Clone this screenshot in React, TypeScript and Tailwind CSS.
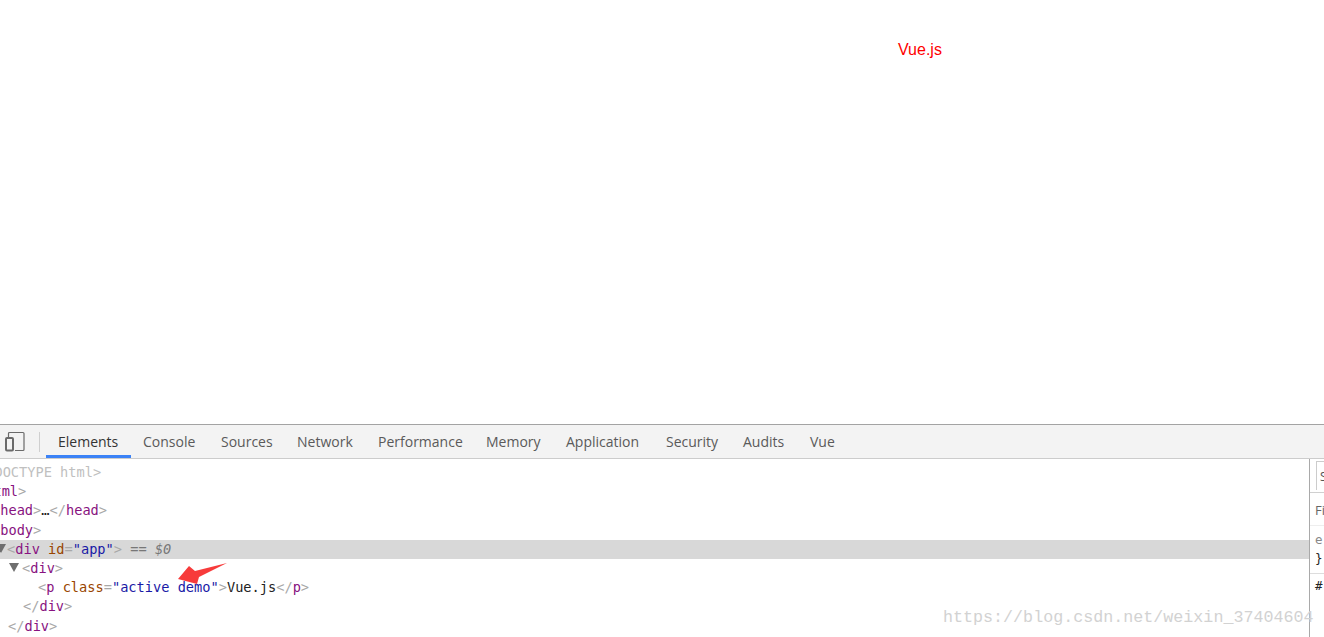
const tabs = [
  { name: "Console", width: "w-[78px]" },
  { name: "Sources", width: "w-[76px]" },
  { name: "Network", width: "w-[81px]" },
  { name: "Performance", width: "w-[108px]" },
  { name: "Memory", width: "w-[80px]" },
  { name: "Application", width: "w-[100px]" },
  { name: "Security", width: "w-[77px]" },
  { name: "Audits", width: "w-[67px]" },
  { name: "Vue", width: "w-[50px]" },
];

const Tag = ({ children }: { children: React.ReactNode }) => <span className="text-[#881280]">{children}</span>;
const Br = ({ children }: { children: React.ReactNode }) => <span className="text-[#a8a8a8]">{children}</span>;

const Caret = ({ className }: { className: string }) => (
  <svg width="10" height="9" viewBox="0 0 10 9" className={className}>
    <polygon points="0,0 10,0 5,9" fill="#6e6e6e" />
  </svg>
);

const App = () => {
  return (
    <div className="w-[1324px] h-[637px] flex flex-col overflow-hidden bg-white relative font-['Liberation_Sans',sans-serif]">
      <div className="h-[424px] pl-[898px] pt-[40px] text-[16px] leading-[20px] text-[#ff0000]">Vue.js</div>

      <div className="h-[35px] flex items-stretch bg-[#f3f3f3] border-t border-t-[#a3a3a3] border-b border-b-[#cccccc]">
        <div className="w-[46px] flex items-center">
          <svg width="20" height="21" viewBox="0 0 20 21" className="ml-[5px]" fill="none" stroke="#6a6a6a">
            <path d="M3.5 6V2.5a1 1 0 0 1 1-1h13.5a1 1 0 0 1 1 1v16a1 1 0 0 1-1 1h-8" strokeWidth="1.2" />
            <rect x="1" y="7" width="7" height="12.5" rx="1" strokeWidth="2" />
          </svg>
          <div className="w-px h-[20px] bg-[#cfcfcf] ml-[14px]"></div>
        </div>
        <div className="flex font-['Open_Sans',sans-serif] text-[14px] leading-[20px] text-[#5a5a5a]">
          <div className="w-[85px] pl-[12px] pt-[7px] text-[#333333] border-b-[3px] border-b-[#3b82f6]">Elements</div>
          {tabs.map((tab) => (
            <div key={tab.name} className={`${tab.width} pl-[12px] pt-[7px]`}>
              {tab.name}
            </div>
          ))}
        </div>
      </div>

      <div className="flex-1 flex min-h-0">
        <div className="w-[1309px] pt-[4px] overflow-hidden font-['DejaVu_Sans_Mono',monospace] text-[13.65px] leading-[19.2px] whitespace-pre text-[#222222]">
          <div className="ml-[-22px] text-[#c0c0c0]">{"<!DOCTYPE html>"}</div>
          <div className="ml-[-23px]"><Br>&lt;</Br><Tag>html</Tag><Br>&gt;</Br></div>
          <div className="ml-[-8px]"><Br>&lt;</Br><Tag>head</Tag><Br>&gt;</Br>…<Br>&lt;/</Br><Tag>head</Tag><Br>&gt;</Br></div>
          <div className="ml-[-8px]"><Br>&lt;</Br><Tag>body</Tag><Br>&gt;</Br></div>
          <div className="bg-[#d8d8d8] pl-[7px] relative">
            <Caret className="absolute left-[-4px] top-[4px]" />
            <Br>&lt;</Br><Tag>div</Tag> <span className="text-[#994500]">id</span><Br>=</Br><span className="text-[#1a1aa6]">"app"</span><Br>&gt;</Br>
            <span className="text-[#777777]"> == <i>$0</i></span>
          </div>
          <div className="pl-[22px] relative">
            <Caret className="absolute left-[9px] top-[4px]" />
            <Br>&lt;</Br><Tag>div</Tag><Br>&gt;</Br>
          </div>
          <div className="pl-[38px]">
            <Br>&lt;</Br><Tag>p</Tag> <span className="text-[#994500]">class</span><Br>=</Br><span className="text-[#1a1aa6]">"active demo"</span><Br>&gt;</Br>Vue.js<Br>&lt;/</Br><Tag>p</Tag><Br>&gt;</Br>
          </div>
          <div className="pl-[23px]"><Br>&lt;/</Br><Tag>div</Tag><Br>&gt;</Br></div>
          <div className="pl-[8px]"><Br>&lt;/</Br><Tag>div</Tag><Br>&gt;</Br></div>
        </div>

        <div className="flex-1 border-l border-l-[#a9a9a9] overflow-hidden">
          <div className="h-[34px] pl-[6px] pt-[2px] border-b border-b-[#d0d0d0]">
            <div className="h-[29px] border-l border-t border-l-[#cccccc] border-t-[#cccccc] pl-[3px] pt-[6px] font-['Open_Sans',sans-serif] text-[12px] text-[#555555]">S</div>
          </div>
          <div className="h-[33px] pl-[5px] pt-[7px] border-b border-b-[#eeeeee] font-['Open_Sans',sans-serif] text-[13px] leading-[20px] text-[#666666] whitespace-nowrap">Fi</div>
          <div className="h-[48px] pl-[5px] pt-[4px] border-b border-b-[#dddddd] font-['DejaVu_Sans_Mono',monospace] text-[12.5px] leading-[19px]">
            <div className="text-[#888888]">e</div>
            <div className="text-[#222222]">{"}"}</div>
          </div>
          <div className="pl-[5px] pt-[2px] font-['DejaVu_Sans_Mono',monospace] text-[12.5px] leading-[19px] text-[#222222]">#</div>
        </div>
      </div>

      <svg width="52" height="24" viewBox="0 0 52 24" className="absolute left-[177px] top-[562px]">
        <polygon points="1,17 12,4 18,9 50,1 22,15 20,22" fill="#f73b3b" />
      </svg>

      <div className="absolute left-[943px] top-[608px] font-['Liberation_Mono',monospace] text-[16.7px] leading-[20px] text-[#d2d2d2] whitespace-nowrap">
        https://blog.csdn.net/weixin_37404604
      </div>
    </div>
  );
};

export default App;
